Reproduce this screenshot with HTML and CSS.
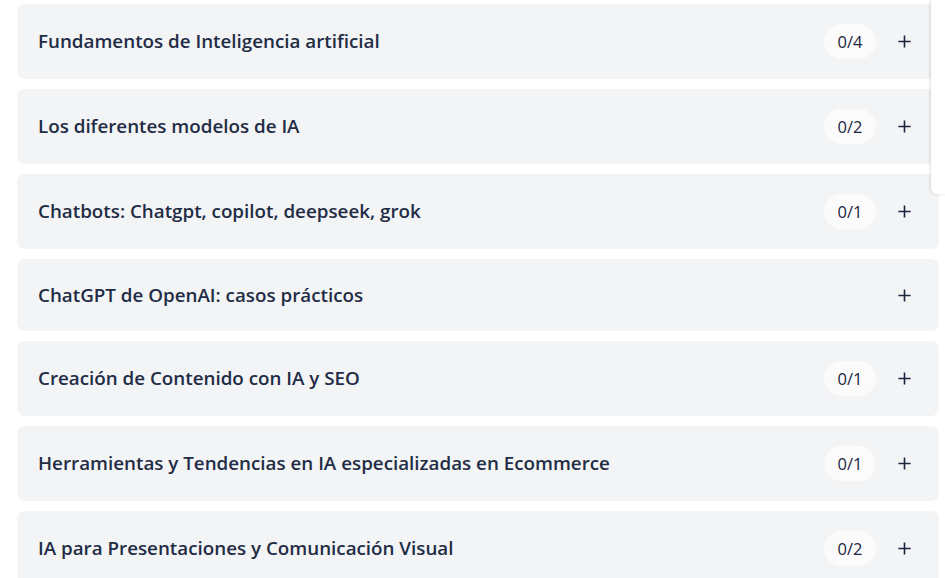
FILE: index.html
```html
<!DOCTYPE html>
<html lang="es">
<head>
<meta charset="utf-8">
<link rel="stylesheet" href="styles.css">
</head>
<body>
<main class="list">
  <div class="item"><span class="title">Fundamentos de Inteligencia artificial</span><span class="badge">0/4</span><span class="plus"><svg viewBox="0 0 16 16"><path d="M8 1.5v13M1.5 8h13"/></svg></span></div>
  <div class="item"><span class="title">Los diferentes modelos de IA</span><span class="badge">0/2</span><span class="plus"><svg viewBox="0 0 16 16"><path d="M8 1.5v13M1.5 8h13"/></svg></span></div>
  <div class="item"><span class="title">Chatbots: Chatgpt, copilot, deepseek, grok</span><span class="badge">0/1</span><span class="plus"><svg viewBox="0 0 16 16"><path d="M8 1.5v13M1.5 8h13"/></svg></span></div>
  <div class="item"><span class="title">ChatGPT de OpenAI: casos prácticos</span><span class="plus"><svg viewBox="0 0 16 16"><path d="M8 1.5v13M1.5 8h13"/></svg></span></div>
  <div class="item"><span class="title">Creación de Contenido con IA y SEO</span><span class="badge">0/1</span><span class="plus"><svg viewBox="0 0 16 16"><path d="M8 1.5v13M1.5 8h13"/></svg></span></div>
  <div class="item"><span class="title">Herramientas y Tendencias en IA especializadas en Ecommerce</span><span class="badge">0/1</span><span class="plus"><svg viewBox="0 0 16 16"><path d="M8 1.5v13M1.5 8h13"/></svg></span></div>
  <div class="item"><span class="title">IA para Presentaciones y Comunicación Visual</span><span class="badge">0/2</span><span class="plus"><svg viewBox="0 0 16 16"><path d="M8 1.5v13M1.5 8h13"/></svg></span></div>
</main>
<div class="side-panel"></div>
</body>
</html>
```
FILE: styles.css
```css
html, body {
  margin: 0;
  padding: 0;
  background: #ffffff;
  overflow: hidden;
}
body {
  font-family: "Open Sans", "Liberation Sans", sans-serif;
  color: #1b2540;
}
.list {
  display: flex;
  flex-direction: column;
  gap: 10px;
  padding: 4px 6px 0 17px;
}
.item {
  display: flex;
  align-items: center;
  background: #f3f4f6;
  border-radius: 8px;
  padding: 20px 19px 20px 21px;
  min-height: 32px;
}
.title {
  flex: 1;
  font-size: 18.8px;
  font-weight: 600;
  line-height: 28px;
  color: #222c45;
  margin-top: -1px;
}
.badge {
  width: 52px;
  height: 35px;
  border-radius: 18px;
  background: #fbfbfc;
  display: flex;
  align-items: center;
  justify-content: center;
  font-size: 16.5px;
  font-weight: 400;
  margin-right: 12px;
}
.plus {
  width: 32px;
  height: 32px;
  display: flex;
  align-items: center;
  justify-content: center;
}
.plus svg {
  width: 15px;
  height: 15px;
  fill: none;
  stroke: #1b2540;
  stroke-width: 1.7;
}
.side-panel {
  position: absolute;
  top: 0;
  left: 931px;
  width: 40px;
  height: 194px;
  background: #ffffff;
  border-bottom-left-radius: 6px;
  box-shadow: -1px 0 3px rgba(0,0,0,0.12);
}
```
